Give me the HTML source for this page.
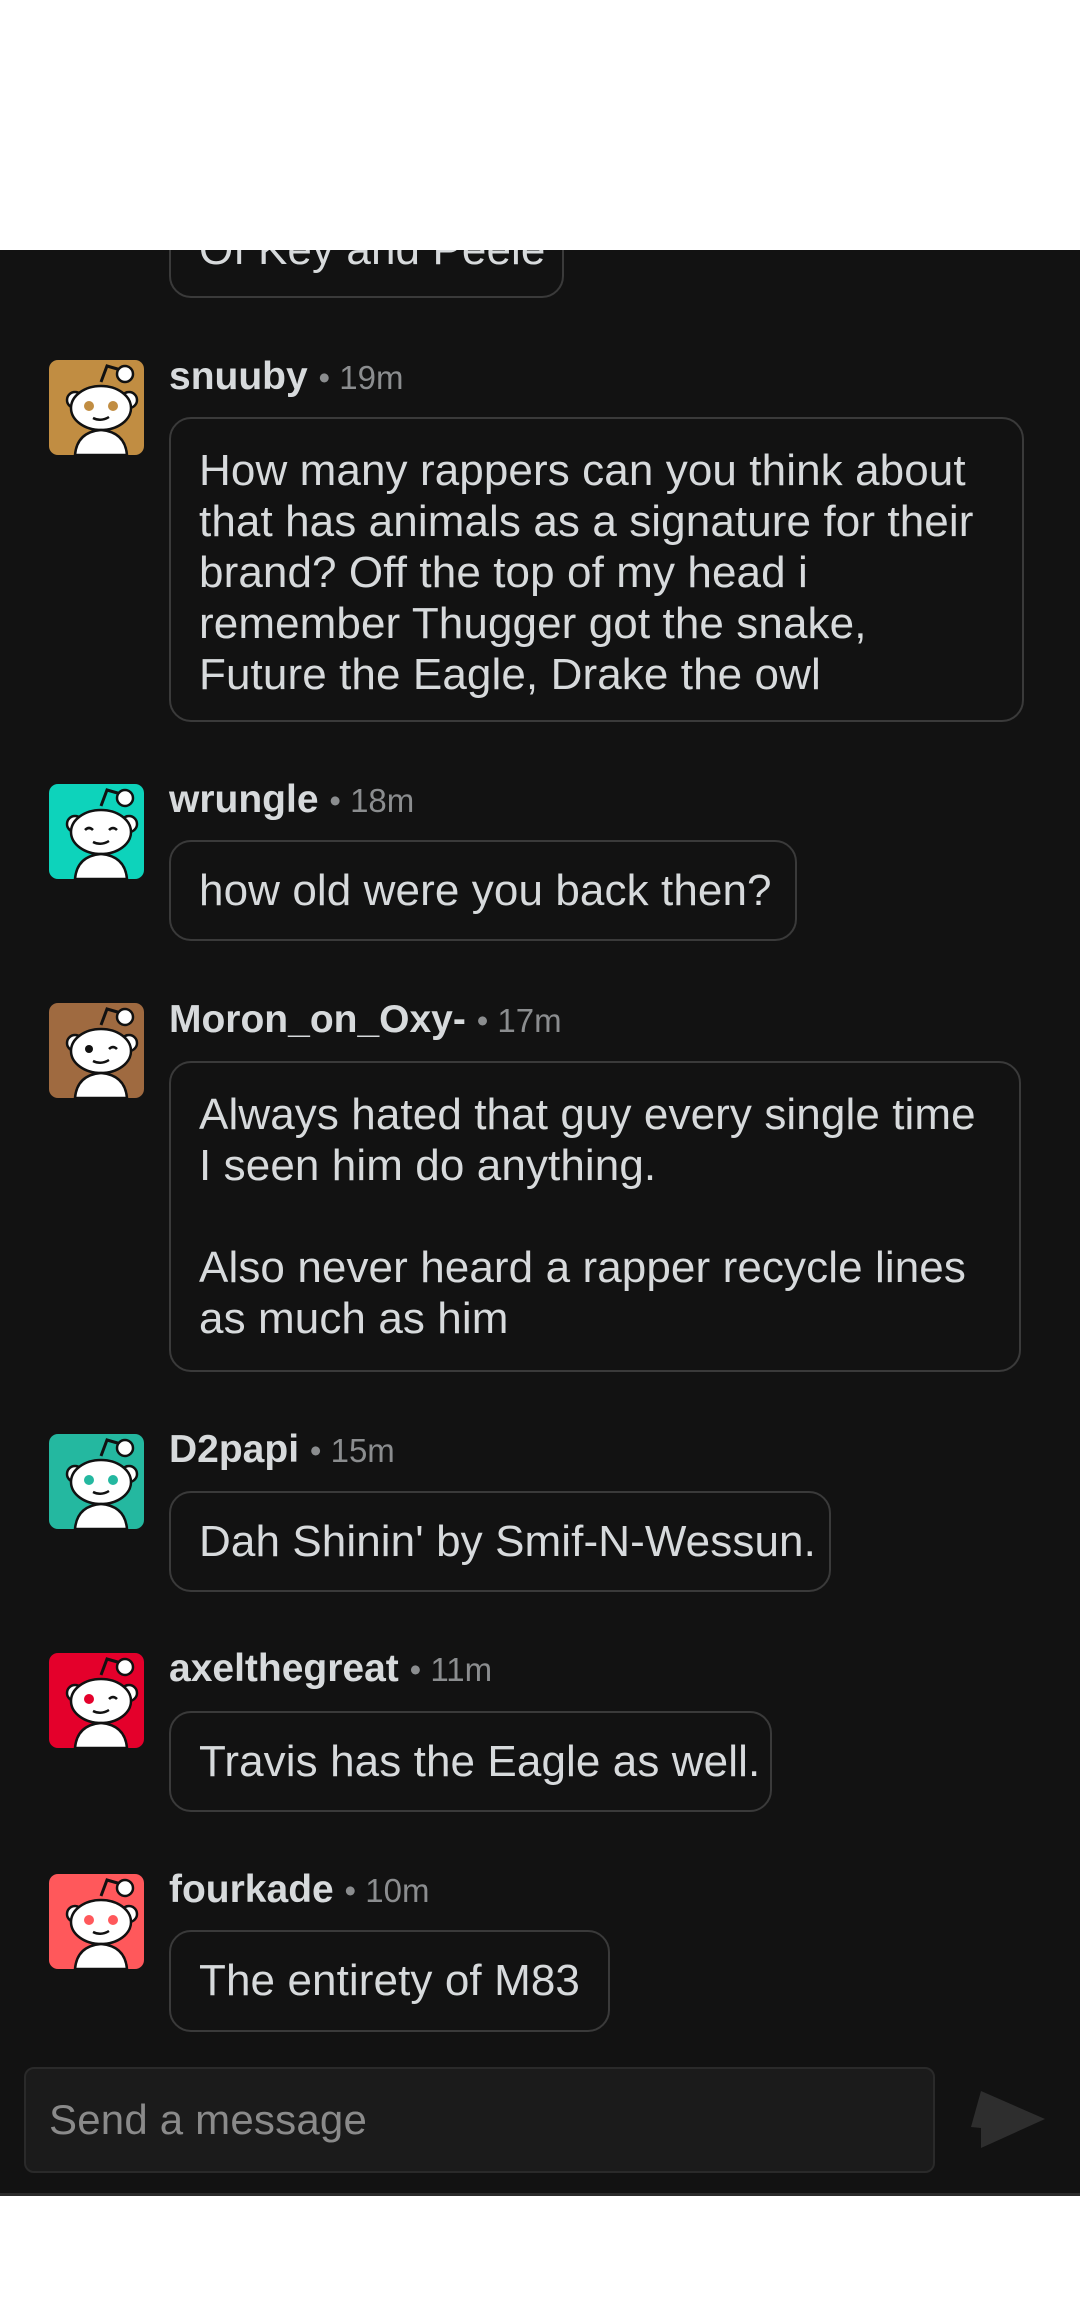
<!DOCTYPE html>
<html><head><meta charset="utf-8">
<style>
html,body{margin:0;padding:0;}
body{width:1080px;height:2310px;background:#fff;position:relative;overflow:hidden;font-family:"Liberation Sans",sans-serif;}
#dark{position:absolute;left:0;top:250px;width:1080px;height:1943px;background:#121212;border-bottom:3px solid #2b2b2b;overflow:hidden;}
.av{position:absolute;left:49px;width:95px;height:95px;border-radius:9px;overflow:hidden;}
.name{position:absolute;left:169px;font-size:39px;font-weight:bold;color:#d7dadc;line-height:46px;white-space:nowrap;}
.name span{font-weight:normal;color:#8b8d8f;font-size:33px;}
.bub{position:absolute;left:169px;box-sizing:border-box;border:2.5px solid #3a3a3a;border-radius:22px;padding:0 0 0 28px;color:#d7dadc;font-size:44px;letter-spacing:0.1px;line-height:51px;white-space:nowrap;}
.bub div{position:absolute;left:28px;}
#top{position:absolute;left:0;top:0;width:1080px;height:250px;background:#fff;z-index:5;}
</style></head><body>
<div id="top"></div>
<svg width="0" height="0" style="position:absolute">
<defs>
<g id="snoo">
<path d="M52 22 L58 6 L72 10" fill="none" stroke="#111" stroke-width="3"/>
<circle cx="76" cy="14" r="8" fill="#fff" stroke="#111" stroke-width="2.5"/>
<ellipse cx="26" cy="40" rx="8" ry="8" fill="#fff" stroke="#111" stroke-width="2.5"/>
<ellipse cx="80" cy="40" rx="8" ry="8" fill="#fff" stroke="#111" stroke-width="2.5"/>
<ellipse cx="52" cy="48" rx="30" ry="22" fill="#fff" stroke="#111" stroke-width="2.5"/>
<path d="M26 95 Q28 72 52 70 Q76 72 78 95 Z" fill="#fff" stroke="#111" stroke-width="2.5"/>
<path d="M44 58 Q52 62 60 57" fill="none" stroke="#111" stroke-width="2.5"/>
</g>
</defs>
</svg>
<div id="dark">
<div class="bub" style="top:-80px;width:395px;height:128px;"><div style="top:52px">Of Key and Peele</div></div>

<div class="av" style="top:110px;background:#c18d42"><svg width="95" height="95"><use href="#snoo"/><circle cx="40" cy="46" r="5" fill="#c18d42"/><circle cx="64" cy="46" r="5" fill="#c18d42"/></svg></div>
<div class="name" style="top:104px">snuuby <span>• 19m</span></div>
<div class="bub" style="top:167px;width:855px;height:305px;"><div style="top:26px">How many rappers can you think about<br>that has animals as a signature for their<br>brand? Off the top of my head i<br>remember Thugger got the snake,<br>Future the Eagle, Drake the owl</div></div>

<div class="av" style="top:534px;background:#0dd3bb"><svg width="95" height="95"><use href="#snoo"/><path d="M36 46 Q40 42 44 46 M60 46 Q64 42 68 46" stroke="#111" stroke-width="2.5" fill="none"/></svg></div>
<div class="name" style="top:527px">wrungle <span>• 18m</span></div>
<div class="bub" style="top:590px;width:628px;height:101px;"><div style="top:23px">how old were you back then?</div></div>

<div class="av" style="top:753px;background:#9f6a40"><svg width="95" height="95"><use href="#snoo"/><circle cx="40" cy="46" r="4" fill="#111"/><path d="M60 46 Q64 42 68 46" stroke="#111" stroke-width="2.5" fill="none"/></svg></div>
<div class="name" style="top:747px">Moron_on_Oxy- <span>• 17m</span></div>
<div class="bub" style="top:811px;width:852px;height:311px;"><div style="top:26px">Always hated that guy every single time<br>I seen him do anything.<br><br>Also never heard a rapper recycle lines<br>as much as him</div></div>

<div class="av" style="top:1184px;background:#24b8a0"><svg width="95" height="95"><use href="#snoo"/><circle cx="40" cy="46" r="5" fill="#24b8a0"/><circle cx="64" cy="46" r="5" fill="#24b8a0"/></svg></div>
<div class="name" style="top:1177px">D2papi <span>• 15m</span></div>
<div class="bub" style="top:1241px;width:662px;height:101px;"><div style="top:23px">Dah Shinin' by Smif-N-Wessun.</div></div>

<div class="av" style="top:1403px;background:#e4002b"><svg width="95" height="95"><use href="#snoo"/><circle cx="40" cy="46" r="5" fill="#e4002b"/><path d="M60 46 Q64 42 68 46" stroke="#111" stroke-width="2.5" fill="none"/></svg></div>
<div class="name" style="top:1396px">axelthegreat <span>• 11m</span></div>
<div class="bub" style="top:1461px;width:603px;height:101px;"><div style="top:23px">Travis has the Eagle as well.</div></div>

<div class="av" style="top:1624px;background:#ff585b"><svg width="95" height="95"><use href="#snoo"/><circle cx="40" cy="46" r="5" fill="#ff585b"/><circle cx="64" cy="46" r="5" fill="#ff585b"/></svg></div>
<div class="name" style="top:1617px">fourkade <span>• 10m</span></div>
<div class="bub" style="top:1680px;width:441px;height:102px;"><div style="top:23px">The entirety of M83</div></div>

<div style="position:absolute;left:24px;top:1817px;width:911px;height:106px;box-sizing:border-box;background:#1b1b1b;border:2px solid #2a2a2a;border-radius:10px;"><div style="position:absolute;left:23px;top:26px;font-size:42px;letter-spacing:0.2px;line-height:50px;color:#8a8a8a;">Send a message</div></div>
<svg style="position:absolute;left:969px;top:1840px" width="78" height="60" viewBox="0 0 78 60"><path d="M12 1 L76 29 L12 58 L12 38 L2 37 Z" fill="#2e2e2e"/></svg>
</div>
</body></html>
